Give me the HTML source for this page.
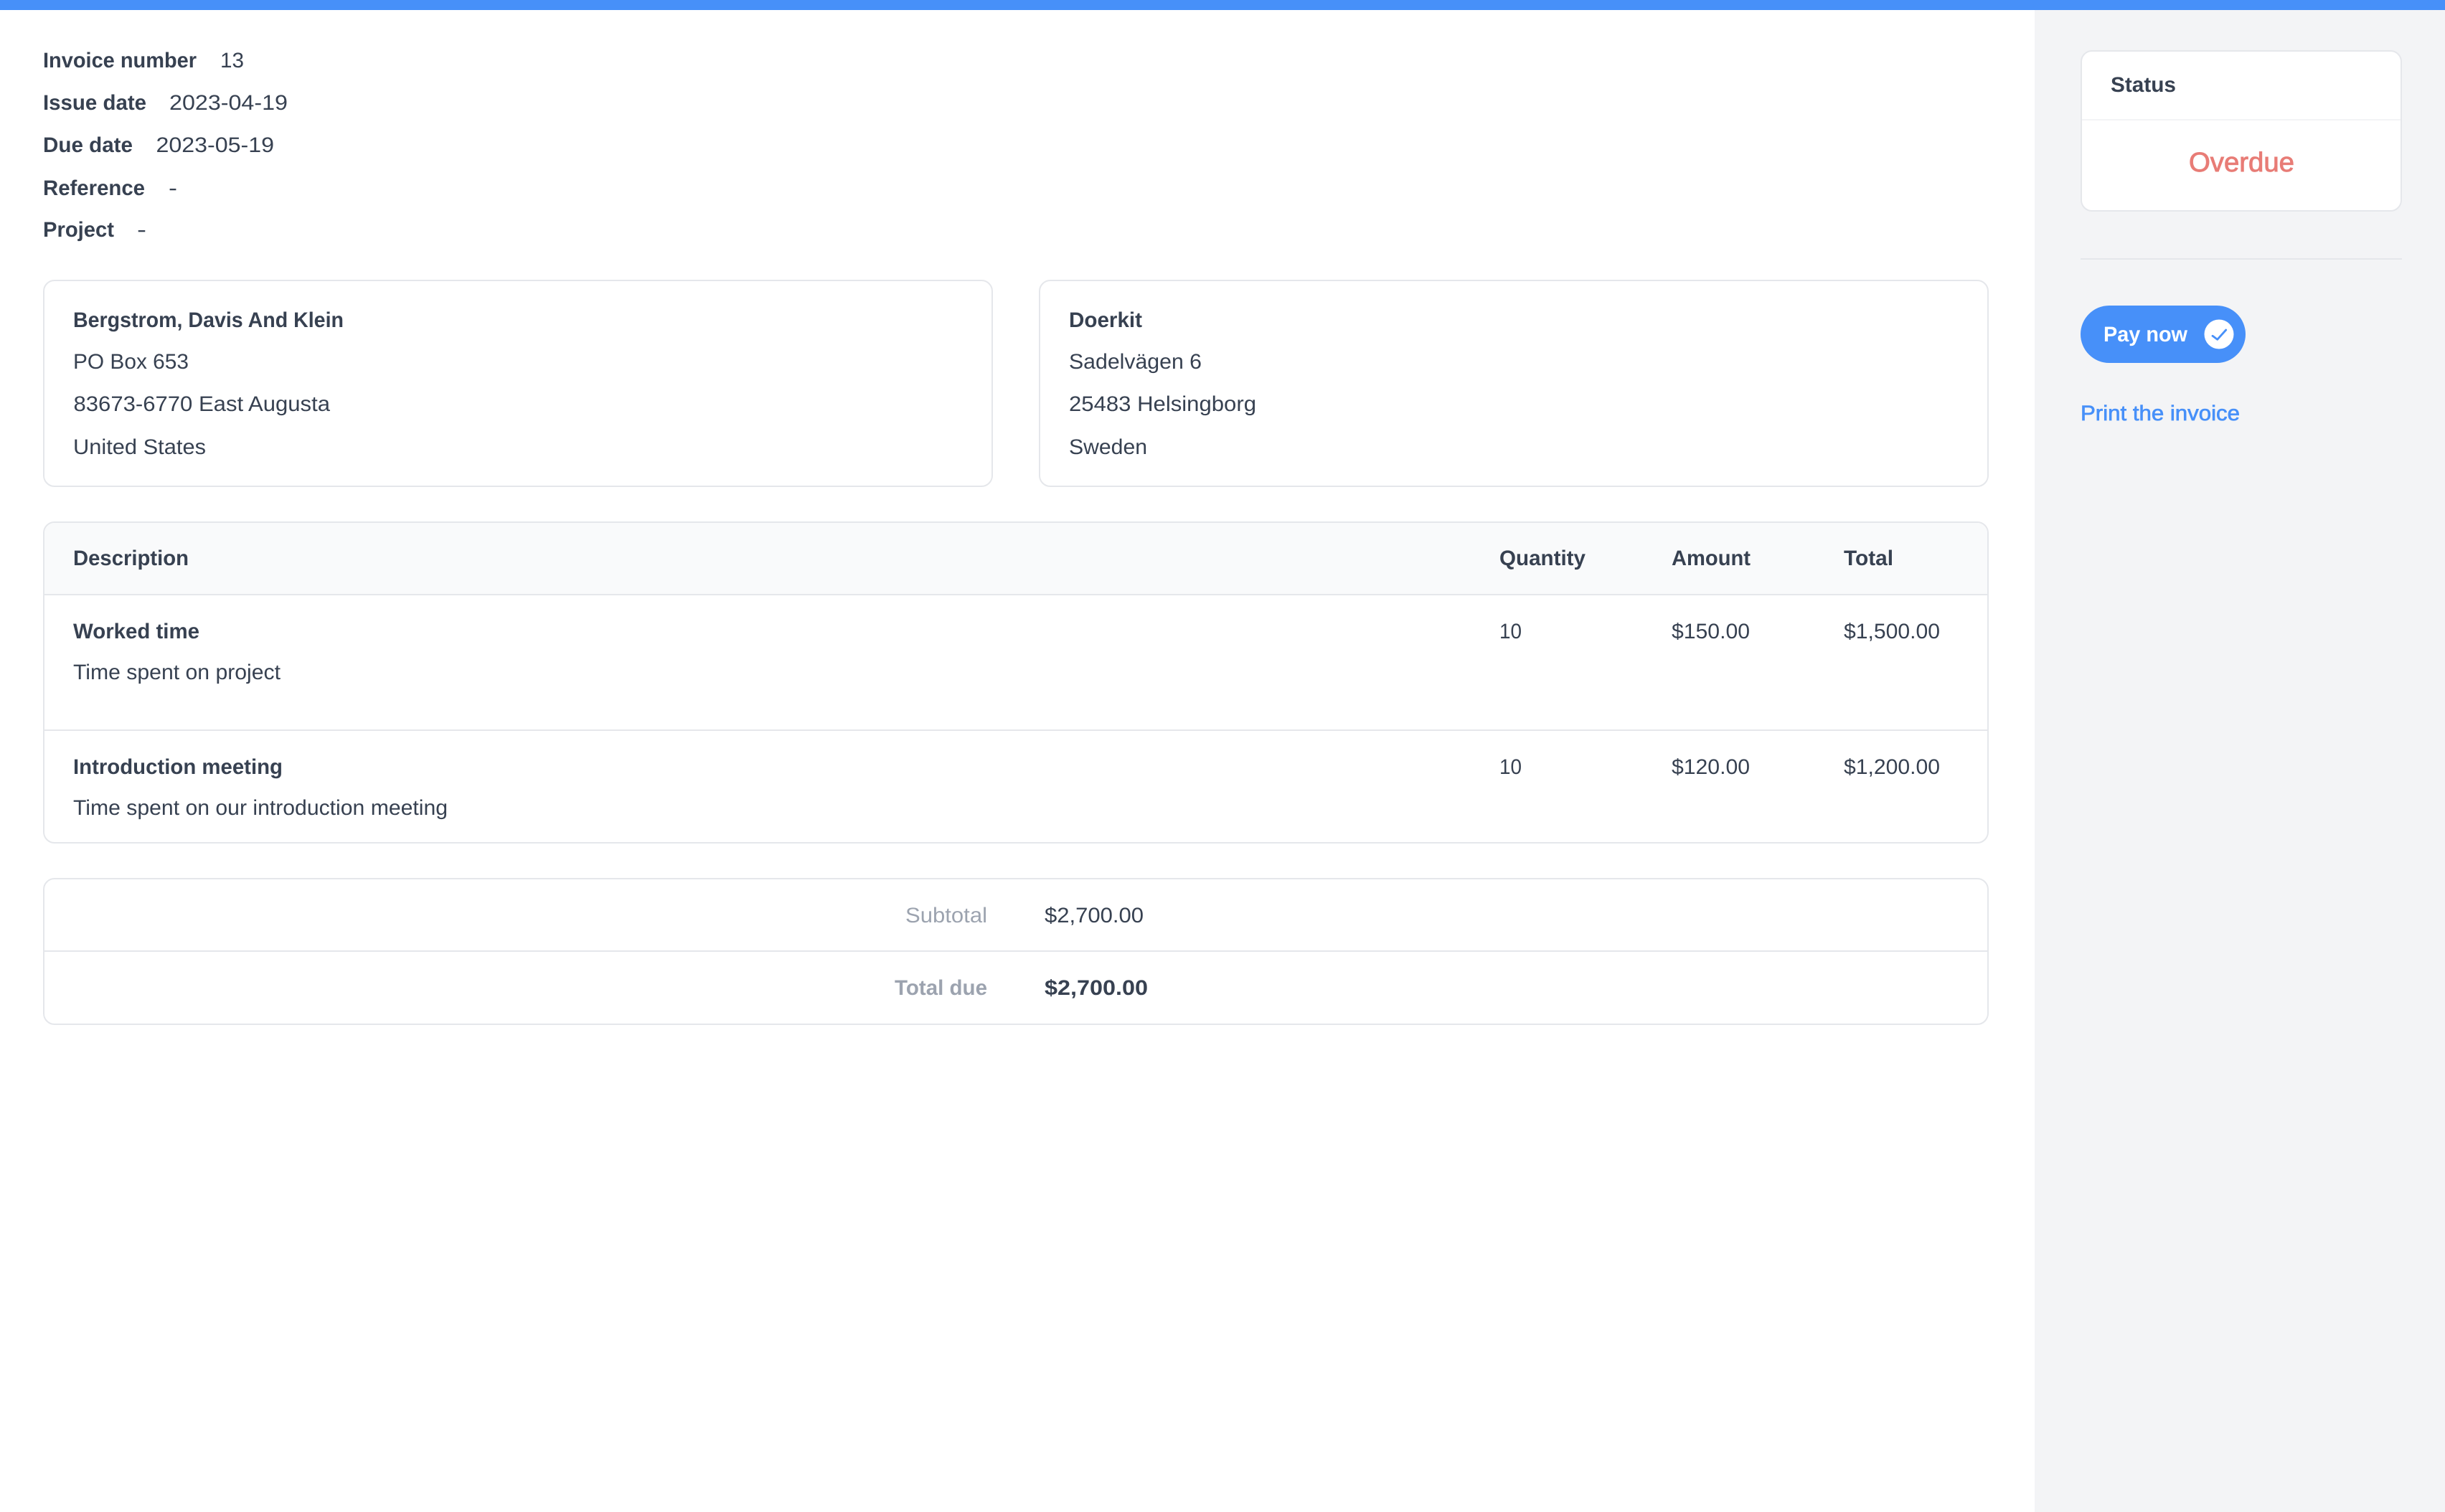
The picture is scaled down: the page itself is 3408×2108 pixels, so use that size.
<!DOCTYPE html>
<html lang="en"><head><meta charset="utf-8"><title>Invoice</title>
<style>
html,body{margin:0;padding:0;background:#fff;width:3408px;height:2108px;overflow:hidden}
svg{display:block}
text{font-family:"Liberation Sans",sans-serif;font-size:29.6px;fill:#374151;text-rendering:geometricPrecision}
.b{font-weight:700}
.m{fill:#9ca3af}
</style></head><body>
<svg xmlns="http://www.w3.org/2000/svg" width="3408" height="2108" viewBox="0 0 3408 2108">
<rect width="3408" height="2108" fill="#fff"/>
<rect x="2836" y="0" width="572" height="2108" fill="#f3f4f6"/>
<rect width="3408" height="14" fill="#4790f9"/>

<text class="b" x="60" y="94" textLength="214" lengthAdjust="spacingAndGlyphs">Invoice number</text>
<text x="307" y="94" textLength="33" lengthAdjust="spacingAndGlyphs">13</text>
<text class="b" x="60" y="153" textLength="144" lengthAdjust="spacingAndGlyphs">Issue date</text>
<text x="236" y="153" textLength="165" lengthAdjust="spacingAndGlyphs">2023-04-19</text>
<text class="b" x="60" y="212" textLength="125" lengthAdjust="spacingAndGlyphs">Due date</text>
<text x="217.5" y="212" textLength="164.5" lengthAdjust="spacingAndGlyphs">2023-05-19</text>
<text class="b" x="60" y="272" textLength="142" lengthAdjust="spacingAndGlyphs">Reference</text>
<text x="235" y="272" textLength="12" lengthAdjust="spacingAndGlyphs">-</text>
<text class="b" x="60" y="330" textLength="99" lengthAdjust="spacingAndGlyphs">Project</text>
<text x="191" y="330" textLength="13" lengthAdjust="spacingAndGlyphs">-</text>

<rect x="61" y="391" width="1322" height="287" rx="15" fill="#fff" stroke="#e5e7eb" stroke-width="2"/>
<rect x="1449" y="391" width="1322" height="287" rx="15" fill="#fff" stroke="#e5e7eb" stroke-width="2"/>
<text class="b" x="102" y="456" textLength="377" lengthAdjust="spacingAndGlyphs">Bergstrom, Davis And Klein</text>
<text x="102" y="514" textLength="161" lengthAdjust="spacingAndGlyphs">PO Box 653</text>
<text x="102.5" y="573" textLength="357.5" lengthAdjust="spacingAndGlyphs">83673-6770 East Augusta</text>
<text x="102" y="633" textLength="185" lengthAdjust="spacingAndGlyphs">United States</text>
<text class="b" x="1490" y="456" textLength="102" lengthAdjust="spacingAndGlyphs">Doerkit</text>
<text x="1490" y="514" textLength="185" lengthAdjust="spacingAndGlyphs">Sadelvägen 6</text>
<text x="1490" y="573" textLength="261" lengthAdjust="spacingAndGlyphs">25483 Helsingborg</text>
<text x="1490" y="633" textLength="109" lengthAdjust="spacingAndGlyphs">Sweden</text>

<rect x="61" y="728" width="2710" height="447" rx="15" fill="#fff" stroke="#e5e7eb" stroke-width="2"/>
<path d="M62 829V743a14 14 0 0 1 14-14H2756a14 14 0 0 1 14 14V829Z" fill="#f9fafb"/>
<rect x="62" y="828" width="2708" height="2" fill="#e5e7eb"/>
<rect x="62" y="1017" width="2708" height="2" fill="#e5e7eb"/>
<text class="b" x="102" y="788" textLength="161" lengthAdjust="spacingAndGlyphs">Description</text>
<text class="b" x="2090" y="788" textLength="120" lengthAdjust="spacingAndGlyphs">Quantity</text>
<text class="b" x="2330" y="788" textLength="110" lengthAdjust="spacingAndGlyphs">Amount</text>
<text class="b" x="2570" y="788" textLength="69" lengthAdjust="spacingAndGlyphs">Total</text>
<text class="b" x="102" y="890" textLength="176" lengthAdjust="spacingAndGlyphs">Worked time</text>
<text x="102" y="947" textLength="289" lengthAdjust="spacingAndGlyphs">Time spent on project</text>
<text x="2090" y="890" textLength="31" lengthAdjust="spacingAndGlyphs">10</text>
<text x="2330" y="890" textLength="109" lengthAdjust="spacingAndGlyphs">$150.00</text>
<text x="2570" y="890" textLength="134" lengthAdjust="spacingAndGlyphs">$1,500.00</text>
<text class="b" x="102" y="1079" textLength="292" lengthAdjust="spacingAndGlyphs">Introduction meeting</text>
<text x="102" y="1136" textLength="522" lengthAdjust="spacingAndGlyphs">Time spent on our introduction meeting</text>
<text x="2090" y="1079" textLength="31" lengthAdjust="spacingAndGlyphs">10</text>
<text x="2330" y="1079" textLength="109" lengthAdjust="spacingAndGlyphs">$120.00</text>
<text x="2570" y="1079" textLength="134" lengthAdjust="spacingAndGlyphs">$1,200.00</text>

<rect x="61" y="1225" width="2710" height="203" rx="15" fill="#fff" stroke="#e5e7eb" stroke-width="2"/>
<rect x="62" y="1325" width="2708" height="2" fill="#e5e7eb"/>
<text class="m" x="1262" y="1286" textLength="114" lengthAdjust="spacingAndGlyphs">Subtotal</text>
<text x="1456" y="1286" textLength="138" lengthAdjust="spacingAndGlyphs">$2,700.00</text>
<text class="b m" x="1247" y="1387" textLength="129" lengthAdjust="spacingAndGlyphs">Total due</text>
<text class="b" x="1456" y="1387" textLength="144" lengthAdjust="spacingAndGlyphs">$2,700.00</text>

<rect x="2901" y="71" width="446" height="223" rx="15" fill="#fff" stroke="#e5e7eb" stroke-width="2"/>
<rect x="2902" y="166" width="444" height="2" fill="#f3f4f6"/>
<text class="b" x="2942" y="128" textLength="91" lengthAdjust="spacingAndGlyphs">Status</text>
<text x="3051" y="239" style="font-size:38px;fill:#e87c76;stroke:#e87c76;stroke-width:.9" textLength="147" lengthAdjust="spacingAndGlyphs">Overdue</text>
<rect x="2900" y="360" width="448" height="2" fill="#e5e7eb"/>

<rect x="2900" y="426" width="230" height="80" rx="40" fill="#4790f9"/>
<text class="b" x="2932" y="476" style="fill:#fff" textLength="117" lengthAdjust="spacingAndGlyphs">Pay now</text>
<circle cx="3093" cy="466" r="20.5" fill="#fff"/>
<path d="M3084 468.3L3090.7 473.3L3102.7 460" fill="none" stroke="#4790f9" stroke-width="2.8" stroke-linecap="round" stroke-linejoin="round"/>
<text x="2900" y="586" style="fill:#4790f9;stroke:#4790f9;stroke-width:.7" textLength="222" lengthAdjust="spacingAndGlyphs">Print the invoice</text>
</svg>
</body></html>
